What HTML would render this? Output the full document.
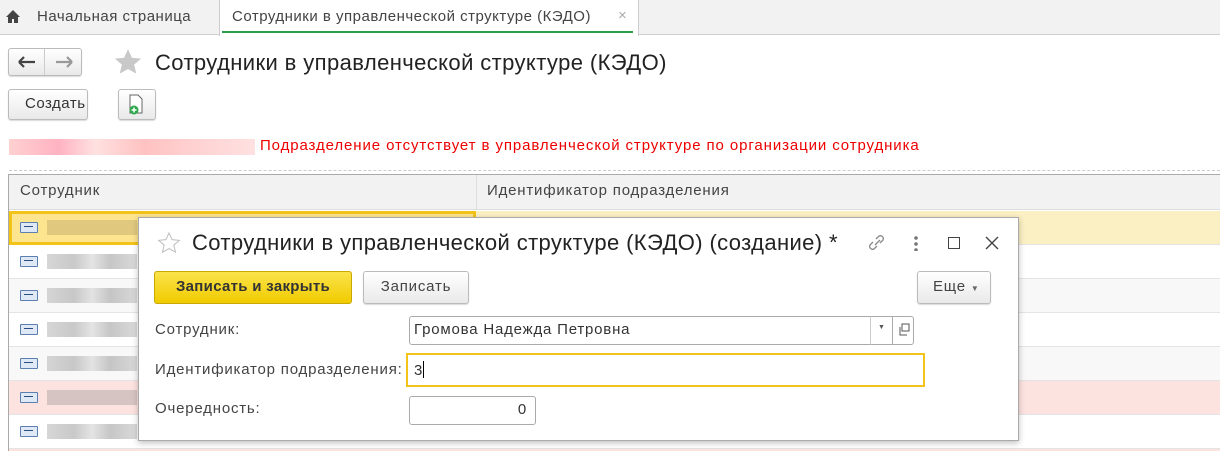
<!DOCTYPE html>
<html><head><meta charset="utf-8"><style>
*{box-sizing:border-box;margin:0;padding:0}
html,body{width:1220px;height:451px;overflow:hidden}
body{background:#fff;font-family:"Liberation Sans",Arial,sans-serif;color:#333;position:relative;font-size:15px;letter-spacing:0.8px}
.abs{position:absolute;white-space:nowrap}
.btn{position:absolute;border:1px solid #bbb;border-radius:3px;background:linear-gradient(#fff,#e9e9e9);box-shadow:0 1px 1px rgba(0,0,0,.15)}
.row{position:absolute;left:9px;width:1211px;height:34px;border-bottom:1px solid #e4e4e4}
.ic{position:absolute;left:11px;top:11px;width:18px;height:11px;border:1px solid #5a7fb0;background:#dfe9f6;border-radius:1px}
.ic:after{content:"";position:absolute;left:3px;top:3px;width:9px;height:3px;border-top:1px solid #2a4f80}
.blur{position:absolute;left:38px;top:9px;width:90px;height:15px;background:linear-gradient(90deg,#ccc,#bbb 30%,#ddd 50%,#b8b8b8 70%,#d0d0d0);opacity:.8}
</style></head><body>
<div class="abs" style="left:0;top:0;width:1220px;height:35px;background:#f2f2f2;border-bottom:1px solid #d0d0d0"></div>
<svg class="abs" style="left:5px;top:9px" width="16" height="15" viewBox="0 0 16 15"><path d="M8 1L1 8h2v6h4v-4h2v4h4V8h2z" fill="#444"/></svg>
<div class="abs" style="left:37px;top:8px;color:#444;letter-spacing:0.5px">Начальная страница</div>
<div class="abs" style="left:219px;top:0;width:420px;height:36px;background:#fff;border-left:1px solid #ccc;border-right:1px solid #ccc"></div>
<div class="abs" style="left:222px;top:31px;width:411px;height:2px;background:#2a9d4a"></div>
<div class="abs" style="left:232px;top:8px;color:#444;letter-spacing:0.5px">Сотрудники в управленческой структуре (КЭДО)</div>
<div class="abs" style="left:618px;top:7px;color:#aaa">×</div>
<div class="btn" style="left:8px;top:48px;width:74px;height:28px"></div>
<div class="abs" style="left:44px;top:49px;width:1px;height:26px;background:#ccc"></div>
<svg class="abs" style="left:18px;top:56px" width="18" height="12"><path d="M1 6h16M1 6l5-5M1 6l5 5" stroke="#444" stroke-width="2.2" fill="none"/></svg>
<svg class="abs" style="left:55px;top:56px" width="18" height="12"><path d="M1 6h16M17 6l-5-5M17 6l-5 5" stroke="#999" stroke-width="2.2" fill="none"/></svg>
<svg class="abs" style="left:113px;top:48px" width="30" height="28" viewBox="0 0 24 23"><path d="M12 1l3.2 7 7.6.7-5.8 5 1.8 7.4L12 17.3 5.2 21.1 7 13.7 1.2 8.7l7.6-.7z" fill="#c8c8c8"/></svg>
<div class="abs" style="left:155px;top:50px;font-size:22px;letter-spacing:0.4px;color:#222">Сотрудники в управленческой структуре (КЭДО)</div>
<div class="btn" style="left:8px;top:89px;width:80px;height:31px"></div>
<div class="abs" style="left:25px;top:95px;color:#333;letter-spacing:0.5px">Создать</div>
<div class="btn" style="left:118px;top:89px;width:38px;height:31px"></div>
<svg class="abs" style="left:126px;top:94px" width="20" height="22"><path d="M4 1h8l4 4v14H4z" fill="#fff" stroke="#666"/><circle cx="8" cy="16" r="4.5" fill="#2aa84a"/><path d="M8 13.5v5M5.5 16h5" stroke="#fff" stroke-width="1.5"/></svg>
<div class="abs" style="left:9px;top:139px;width:246px;height:16px;background:linear-gradient(90deg,#fcc,#fab 20%,#fdd 35%,#fbb 55%,#fcc 75%,#fdd);opacity:.9"></div>
<div class="abs" style="left:260px;top:137px;color:#e00;letter-spacing:0.9px">Подразделение отсутствует в управленческой структуре по организации сотрудника</div>
<div class="abs" style="left:9px;top:170px;width:1211px;border-top:1px dashed #ccc"></div>
<div class="abs" style="left:8px;top:174px;width:1212px;height:277px;border:1px solid #aaa;border-right:none"></div>
<div class="abs" style="left:9px;top:175px;width:1211px;height:35px;background:#f2f2f2;border-bottom:1px solid #ddd"></div>
<div class="abs" style="left:476px;top:175px;width:1px;height:35px;background:#ddd"></div>
<div class="abs" style="left:20px;top:182px;color:#444">Сотрудник</div>
<div class="abs" style="left:487px;top:182px;color:#444">Идентификатор подразделения</div>
<div class="row" style="top:211px;background:#fbf0c4"><div class="abs" style="left:0;top:0;width:467px;height:34px;border:3px solid #f2c318;background:#fde48e"></div><div class="ic"></div><div class="blur" style="background:#d8c27a"></div></div>
<div class="row" style="top:245px;background:#fff"><div class="ic"></div><div class="blur"></div></div>
<div class="row" style="top:279px;background:#f8f8f8"><div class="ic"></div><div class="blur"></div></div>
<div class="row" style="top:313px;background:#fff"><div class="ic"></div><div class="blur"></div></div>
<div class="row" style="top:347px;background:#f8f8f8"><div class="ic"></div><div class="blur"></div></div>
<div class="row" style="top:381px;background:#fde3e0"><div class="ic"></div><div class="blur" style="background:#cbb"></div></div>
<div class="row" style="top:415px;background:#fff"><div class="ic"></div><div class="blur"></div></div>
<div class="row" style="top:449px;height:2px;background:#fde3e0;border:none"></div>
<div class="abs" style="left:138px;top:217px;width:881px;height:224px;background:#fff;border:1px solid #aaa;box-shadow:0 2px 6px rgba(0,0,0,.25)"></div>
<svg class="abs" style="left:157px;top:232px" width="24" height="22" viewBox="0 0 24 23"><path d="M12 1l3.2 7 7.6.7-5.8 5 1.8 7.4L12 17.3 5.2 21.1 7 13.7 1.2 8.7l7.6-.7z" fill="none" stroke="#bbb"/></svg>
<div class="abs" style="left:192px;top:230px;font-size:22px;letter-spacing:0.38px;color:#222">Сотрудники в управленческой структуре (КЭДО) (создание) *</div>
<svg class="abs" style="left:866px;top:233px" width="22" height="20"><path d="M9 12l5-5M7 9l-3 3a3 3 0 004 4l3-3M14 10l3-3a3 3 0 00-4-4l-3 3" stroke="#888" stroke-width="1.3" fill="none"/></svg>
<div class="abs" style="left:914px;top:235px;width:4px;height:16px;background:radial-gradient(circle,#777 1.6px,transparent 2px) 0 0/4px 6px"></div>
<div class="abs" style="left:948px;top:237px;width:12px;height:12px;border:1.5px solid #444"></div>
<svg class="abs" style="left:984px;top:235px" width="16" height="16"><path d="M2 2l12 12M14 2L2 14" stroke="#444" stroke-width="1.4"/></svg>
<div class="abs" style="left:154px;top:271px;width:198px;height:33px;border:1px solid #c9a800;border-radius:3px;background:linear-gradient(#fbe34a,#f0cb00)"></div>
<div class="abs" style="left:154px;top:278px;width:198px;text-align:center;font-weight:bold;color:#333;letter-spacing:0.3px">Записать и закрыть</div>
<div class="btn" style="left:363px;top:271px;width:106px;height:33px"></div>
<div class="abs" style="left:363px;top:278px;width:106px;text-align:center;color:#444">Записать</div>
<div class="btn" style="left:917px;top:271px;width:74px;height:33px"></div>
<div class="abs" style="left:933px;top:278px;color:#444">Еще <span style="font-size:8px;color:#666">▼</span></div>
<div class="abs" style="left:155px;top:321px;color:#444">Сотрудник:</div>
<div class="abs" style="left:409px;top:316px;width:462px;height:29px;border:1px solid #aaa;border-radius:3px 0 0 3px"></div>
<div class="abs" style="left:870px;top:316px;width:23px;height:29px;border:1px solid #aaa;border-left:1px solid #ccc"></div>
<div class="abs" style="left:878px;top:324px;font-size:7px;color:#555">▼</div>
<div class="abs" style="left:892px;top:316px;width:22px;height:29px;border:1px solid #aaa;border-radius:0 3px 3px 0"></div>
<svg class="abs" style="left:897px;top:323px" width="14" height="14"><rect x="5" y="1" width="7" height="7" fill="none" stroke="#555"/><path d="M3 4v8h7" fill="none" stroke="#555"/></svg>
<div class="abs" style="left:414px;top:321px;color:#333">Громова Надежда Петровна</div>
<div class="abs" style="left:155px;top:361px;color:#444">Идентификатор подразделения:</div>
<div class="abs" style="left:406px;top:353px;width:519px;height:34px;border:2px solid #f2c318"></div>
<div class="abs" style="left:414px;top:361px;color:#333">3<span style="display:inline-block;width:1px;height:17px;background:#000;vertical-align:-3px"></span></div>
<div class="abs" style="left:155px;top:400px;color:#444">Очередность:</div>
<div class="abs" style="left:409px;top:396px;width:127px;height:29px;border:1px solid #aaa;border-radius:3px"></div>
<div class="abs" style="left:409px;top:401px;width:118px;text-align:right;color:#333">0</div>
</body></html>
